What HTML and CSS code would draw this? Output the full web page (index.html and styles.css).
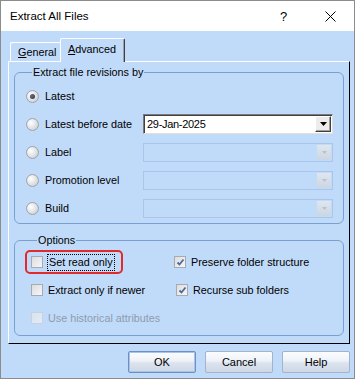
FILE: index.html
```html
<!DOCTYPE html>
<html>
<head>
<meta charset="utf-8">
<link rel="stylesheet" href="styles.css">
</head>
<body>
<div class="window">
  <div class="titlebar">
    <span class="title">Extract All Files</span>
    <span class="qmark">?</span>
    <svg class="close" width="11" height="11" viewBox="0 0 11 11"><path d="M0.5 0.5 L10.5 10.5 M10.5 0.5 L0.5 10.5" stroke="#000" stroke-width="1" fill="none"/></svg>
  </div>
  <div class="content">
    <div class="tabs">
      <div class="tab"><u>G</u>eneral</div>
      <div class="tab active"><u>A</u>dvanced</div>
    </div>
    <div class="panel">
      <fieldset class="group revisions">
        <legend>Extract file revisions by</legend>
        <div class="rev-row">
          <span class="radio checked"></span><span class="lbl">Latest</span>
        </div>
        <div class="rev-row">
          <span class="radio"></span><span class="lbl">Latest before date</span>
          <div class="combo">
            <span class="combo-text">29-Jan-2025</span>
            <span class="combo-btn"><svg width="7" height="4" viewBox="0 0 7 4"><path d="M0 0H7L3.5 4Z" fill="#000"/></svg></span>
          </div>
        </div>
        <div class="rev-row">
          <span class="radio"></span><span class="lbl">Label</span>
          <div class="combo disabled"><span class="combo-text"></span><span class="combo-btn"><svg width="5" height="3" viewBox="0 0 5 3"><path d="M0 0H5L2.5 3Z" fill="#b8c2cc"/></svg></span></div>
        </div>
        <div class="rev-row">
          <span class="radio"></span><span class="lbl">Promotion level</span>
          <div class="combo disabled"><span class="combo-text"></span><span class="combo-btn"><svg width="5" height="3" viewBox="0 0 5 3"><path d="M0 0H5L2.5 3Z" fill="#b8c2cc"/></svg></span></div>
        </div>
        <div class="rev-row">
          <span class="radio"></span><span class="lbl">Build</span>
          <div class="combo disabled"><span class="combo-text"></span><span class="combo-btn"><svg width="5" height="3" viewBox="0 0 5 3"><path d="M0 0H5L2.5 3Z" fill="#b8c2cc"/></svg></span></div>
        </div>
      </fieldset>
      <fieldset class="group options">
        <legend>Options</legend>
        <div class="opt-grid">
          <div class="opt highlight"><span class="check"></span><span class="focus">Set read only</span></div>
          <div class="opt"><span class="check checked"><svg width="9" height="9" viewBox="0 0 9 9"><path d="M1.5 4.5 L3.5 6.5 L7.5 1.5" stroke="#4f6a94" stroke-width="1.8" fill="none"/></svg></span><span>Preserve folder structure</span></div>
          <div class="opt"><span class="check"></span><span>Extract only if newer</span></div>
          <div class="opt shift"><span class="check checked"><svg width="9" height="9" viewBox="0 0 9 9"><path d="M1.5 4.5 L3.5 6.5 L7.5 1.5" stroke="#4f6a94" stroke-width="1.8" fill="none"/></svg></span><span>Recurse sub folders</span></div>
          <div class="opt disabled"><span class="check"></span><span>Use historical attributes</span></div>
        </div>
      </fieldset>
    </div>
    <div class="buttons">
      <button class="btn default">OK</button>
      <button class="btn">Cancel</button>
      <button class="btn">Help</button>
    </div>
  </div>
</div>
</body>
</html>
```
FILE: styles.css
```css
* { box-sizing: border-box; }
html, body { margin: 0; padding: 0; background: #fff; }
body {
  font-family: "Liberation Sans", Arial, sans-serif;
  font-size: 10.8px;
  color: #000;
}
.window {
  width: 355px;
  height: 379px;
  border: 1px solid #8c8c8c;
  background: #c0dbf9;
  display: flex;
  flex-direction: column;
}
.titlebar {
  height: 30px;
  flex: none;
  background: #fff;
  display: flex;
  align-items: center;
  padding-left: 9px;
  font-size: 11.5px;
}
.title { flex: 1; }
.qmark {
  font-size: 13px;
  width: 8px;
  margin-right: 37px;
}
.close { margin-right: 18px; }
.content {
  flex: 1;
  display: flex;
  flex-direction: column;
  padding: 7px 4px 0 7px;
}
.tabs {
  display: flex;
  align-items: flex-end;
  height: 23px;
  padding-left: 2px;
}
.tab {
  height: 19px;
  padding: 3px 0 0 7px;
  width: 52px;
  border-top: 1px solid #fff;
  border-left: 1px solid #fff;
  border-radius: 2px 2px 0 0;
}
.tab.active {
  height: 24px;
  width: 65px;
  margin-left: -2px;
  margin-bottom: -1px;
  padding: 4px 0 0 7px;
  background: #c0dbf9;
  border-right: 1px solid #404040;
  box-shadow: inset -1px 0 #a0a0a0;
  position: relative;
  z-index: 1;
}
.panel {
  height: 283px;
  border: 1px solid;
  border-color: #fff #000 #000 #fff;
}
.group {
  margin: 0 5px;
  padding: 0;
  border: 1px solid #7aa0d2;
  border-radius: 6px;
  min-width: 0;
}
.group legend {
  padding: 0 1px;
  margin-left: 6px;
  line-height: 13px;
  font-size: 10.8px;
}
.revisions {
  margin-top: 4px;
  padding: 3px 0 1px 11px;
}
.rev-row {
  height: 28px;
  display: flex;
  align-items: center;
}
.radio {
  width: 13px;
  height: 13px;
  border-radius: 50%;
  border: 1px solid #9ea3aa;
  background: radial-gradient(circle at 35% 35%, #ffffff 0%, #e4e6e9 45%, #c2c6cc 100%);
  flex: none;
  position: relative;
}
.radio.checked::after {
  content: "";
  position: absolute;
  left: 3px; top: 3px;
  width: 5px; height: 5px;
  border-radius: 50%;
  background: radial-gradient(circle at 40% 40%, #6a6a7a, #2a3040);
}
.rev-row .lbl {
  margin-left: 6px;
  width: 98px;
  flex: none;
}
.combo {
  width: 190px;
  height: 20px;
  display: flex;
  align-items: center;
  background: #fff;
  border: 1px solid;
  border-color: #7a7a7a #e0e0e0 #e0e0e0 #7a7a7a;
  box-shadow: inset 1px 1px #404040;
  padding: 0 1px 0 3px;
}
.combo-text {
  flex: 1;
  font-size: 11px;
  letter-spacing: -0.3px;
}
.combo-btn {
  width: 16px;
  height: 16px;
  display: flex;
  align-items: center;
  justify-content: center;
  background: #ececec;
  border: 1px solid;
  border-color: #fff #404040 #404040 #fff;
  box-shadow: inset -1px -1px #a0a0a0;
}
.combo.disabled {
  background: transparent;
  border-color: #a9c6ea;
  box-shadow: none;
  height: 19px;
  padding-right: 1px;
}
.combo.disabled .combo-btn {
  width: 14px;
  height: 15px;
  border: none;
  box-shadow: none;
  background: linear-gradient(#dfe6ee, #ccd6e2);
}
.options {
  margin-top: 10px;
  padding: 1px 0 3px 16px;
}
.opt-grid {
  display: grid;
  grid-template-columns: 143px 1fr;
  grid-auto-rows: 28px;
  justify-items: start;
}
.opt {
  display: flex;
  align-items: center;
}
.opt.shift { padding-left: 2px; }
.check {
  width: 12px;
  height: 12px;
  flex: none;
  border: 1px solid #a7abb0;
  background: linear-gradient(135deg, #dcdde0, #f6f6f7);
  margin-right: 5px;
  display: flex;
  align-items: center;
  justify-content: center;
}
.opt.disabled { color: #8d9bae; }
.opt.disabled .check {
  border-color: #c9d2dc;
  background: linear-gradient(135deg, #d6e2f0, #e4ecf5);
}
.highlight { position: relative; }
.highlight::after {
  content: "";
  position: absolute;
  left: -6px;
  right: -8px;
  top: 2px;
  bottom: 2px;
  border: 2px solid #e22a2d;
  border-radius: 5px;
}
.focus {
  border: 1px dotted #000;
  padding: 1px 1px 2px 1px;
  margin-left: -1px;
}
.buttons {
  display: flex;
  justify-content: flex-end;
  gap: 9px;
  padding-top: 7px;
}
.btn {
  width: 68px;
  height: 22px;
  font-family: "Liberation Sans", Arial, sans-serif;
  font-size: 11px;
  color: #000;
  border: 1px solid #a3b3c9;
  border-radius: 2px;
  background: linear-gradient(#fbfcfe 0%, #eef2f8 45%, #dbe3ee 55%, #cdd8e6 100%);
  padding: 0;
}
.btn.default {
  border-color: #6f8fbf;
  box-shadow: inset 0 0 0 1px #a9c4ea;
}
```
